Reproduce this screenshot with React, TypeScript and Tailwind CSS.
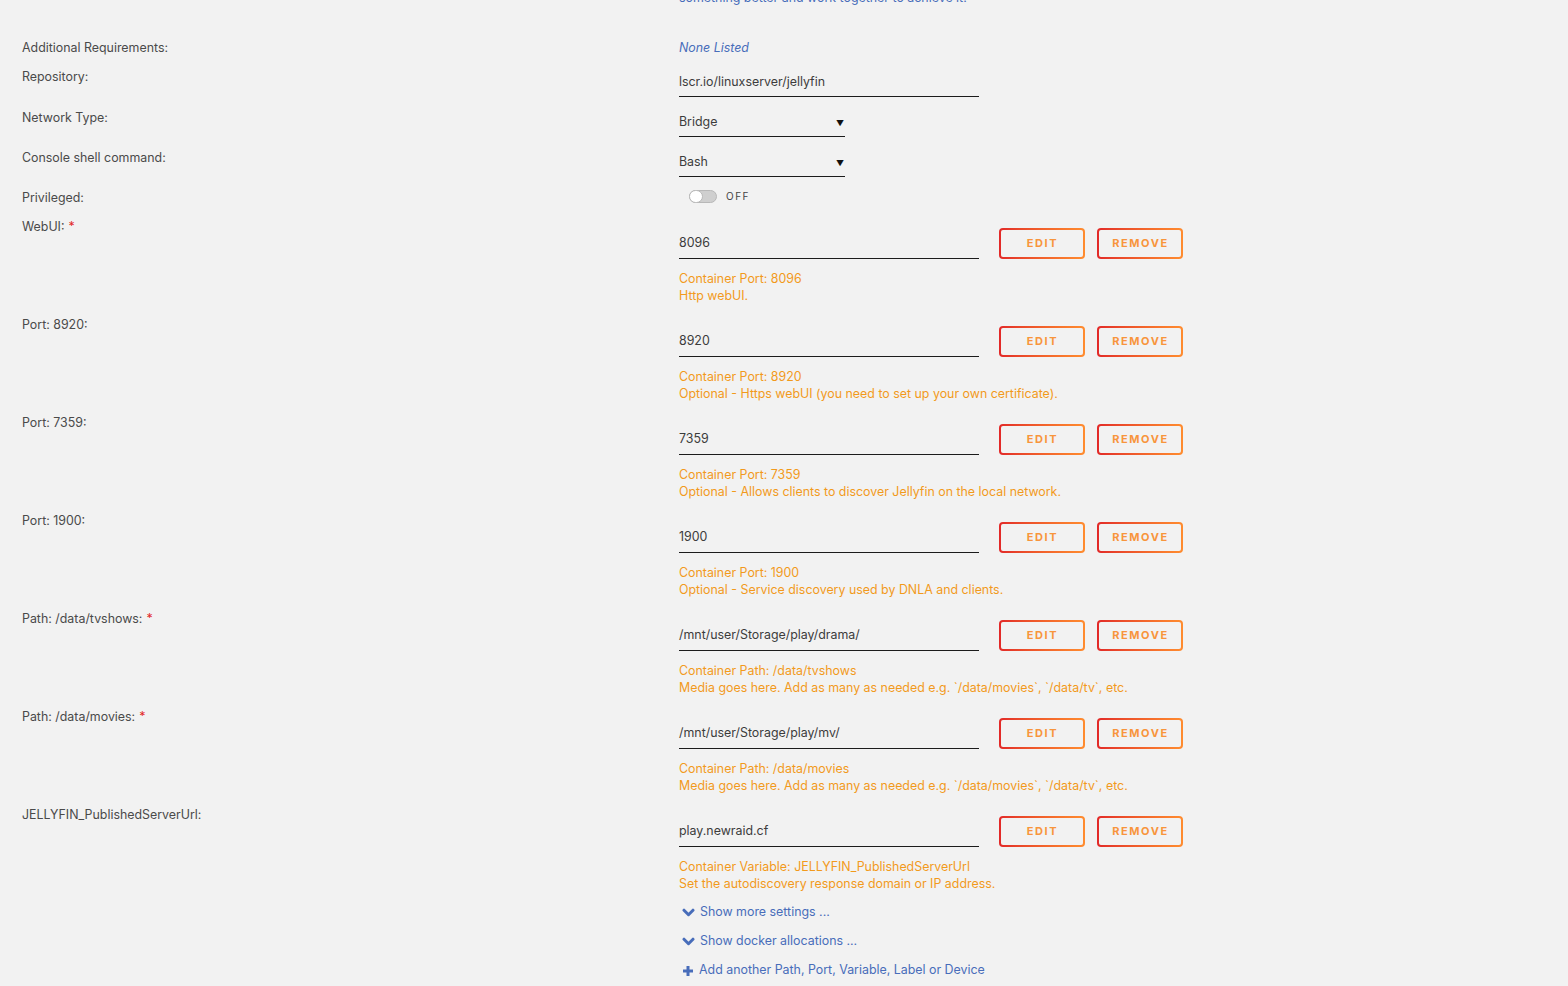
import React from 'react';

// ============================================
// Docker container template form (Unraid style)
// ============================================

interface PortRow {
    label: string;
    required?: boolean;
    value: string;
    target: string;
    note: string;
}

const ROWS: PortRow[] = [
    { label: 'WebUI:', required: true, value: '8096', target: 'Container Port: 8096', note: 'Http webUI.' },
    { label: 'Port: 8920:', value: '8920', target: 'Container Port: 8920', note: 'Optional - Https webUI (you need to set up your own certificate).' },
    { label: 'Port: 7359:', value: '7359', target: 'Container Port: 7359', note: 'Optional - Allows clients to discover Jellyfin on the local network.' },
    { label: 'Port: 1900:', value: '1900', target: 'Container Port: 1900', note: 'Optional - Service discovery used by DNLA and clients.' },
    {
        label: 'Path: /data/tvshows:',
        required: true,
        value: '/mnt/user/Storage/play/drama/',
        target: 'Container Path: /data/tvshows',
        note: 'Media goes here. Add as many as needed e.g. `/data/movies`, `/data/tv`, etc.',
    },
    {
        label: 'Path: /data/movies:',
        required: true,
        value: '/mnt/user/Storage/play/mv/',
        target: 'Container Path: /data/movies',
        note: 'Media goes here. Add as many as needed e.g. `/data/movies`, `/data/tv`, etc.',
    },
    {
        label: 'JELLYFIN_PublishedServerUrl:',
        value: 'play.newraid.cf',
        target: 'Container Variable: JELLYFIN_PublishedServerUrl',
        note: 'Set the autodiscovery response domain or IP address.',
    },
];

const Label = ({ text, required }: { text: string; required?: boolean }) => (
    <div className="w-[679px] shrink-0 pl-[22px] pt-[1px] leading-[18px] text-[#4a4a4a]">
        {text}
        {required && <span className="ml-1 text-[#e22828]">*</span>}
    </div>
);

const GradientButton = ({ children }: { children: React.ReactNode }) => (
    <div className="h-[31px] w-[86px] rounded-[4px] bg-gradient-to-r from-[#e22828] to-[#ff8c2f] p-[2px]">
        <div className="flex h-full w-full items-center justify-center rounded-[2px] bg-[#f2f2f2] pl-[1px] text-[11px] font-bold tracking-[1.6px] text-[#f8953c]">
            {children}
        </div>
    </div>
);

const Select = ({ value }: { value: string }) => (
    <div className="flex h-[29px] w-[166px] items-center justify-between border-b border-[#1c1c1c] pt-[1px] text-[#3c3c3c]">
        <span>{value}</span>
        <span className="mr-[1px] text-[8px] text-[#111]">▼</span>
    </div>
);

const ChevronDown = () => (
    <svg width="13" height="13" viewBox="0 0 13 13" className="ml-[1px] mr-[5px]">
        <path d="M2 4.2 L6.5 8.7 L11 4.2" fill="none" stroke="#486dba" strokeWidth="3" strokeLinecap="round" strokeLinejoin="round" />
    </svg>
);

const Plus = () => (
    <svg width="12" height="12" viewBox="0 0 12 12" className="ml-[1px] mr-[5px]">
        <path d="M6 1 V11 M1 6 H11" stroke="#486dba" strokeWidth="3" />
    </svg>
);

export default function App() {
    return (
        <div
            className="min-h-screen overflow-hidden bg-[#f2f2f2] text-[12.4px]"
            style={{ fontFamily: 'Inter, "Noto Sans", sans-serif' }}
        >
            {/* cut-off description from the section above */}
            <div className="mt-[-11px] h-[17px] pl-[679px] leading-[17px] text-[#486dba]">
                something better and work together to achieve it.
            </div>

            <div className="mt-[32px]">
                {/* Additional requirements */}
                <div className="flex h-[29px]">
                    <Label text="Additional Requirements:" />
                    <div className="pt-[1px] leading-[18px] italic text-[#486dba]">None Listed</div>
                </div>

                {/* Repository */}
                <div className="flex h-[41px]">
                    <Label text="Repository:" />
                    <div className="flex h-[30px] w-[300px] items-center border-b border-[#1c1c1c] pt-[1px] text-[#3c3c3c]">
                        lscr.io/linuxserver/jellyfin
                    </div>
                </div>

                {/* Network type */}
                <div className="flex h-[40px]">
                    <Label text="Network Type:" />
                    <Select value="Bridge" />
                </div>

                {/* Console shell */}
                <div className="flex h-[40px]">
                    <Label text="Console shell command:" />
                    <Select value="Bash" />
                </div>

                {/* Privileged */}
                <div className="flex h-[29px]">
                    <Label text="Privileged:" />
                    <div className="flex h-[16px] items-center pl-[10px]">
                        <div className="relative h-[13px] w-[28px] rounded-full border border-[#b8b8b8] bg-[#cfcfcf]">
                            <div className="absolute left-[-1px] top-[-1px] h-[13px] w-[14px] rounded-full border border-[#b8b8b8] bg-white" />
                        </div>
                        <span className="ml-[9px] text-[10px] tracking-[1.5px] text-[#444]">OFF</span>
                    </div>
                </div>

                {/* Ports / paths / variables */}
                {ROWS.map((row) => (
                    <div key={row.label} className="flex h-[98px]">
                        <Label text={row.label} required={row.required} />
                        <div className="pt-[11px]">
                            <div className="flex items-start gap-[20px]">
                                <div className="flex h-[31px] w-[300px] items-center border-b border-[#1c1c1c] pt-[1px] text-[#3c3c3c]">
                                    {row.value}
                                </div>
                                <div className="flex gap-[12px]">
                                    <GradientButton>EDIT</GradientButton>
                                    <GradientButton>REMOVE</GradientButton>
                                </div>
                            </div>
                            <div className="mt-[11px] leading-[17px] text-[#f29a1c]">
                                <div>{row.target}</div>
                                <div>{row.note}</div>
                            </div>
                        </div>
                    </div>
                ))}

                {/* Links */}
                <div className="mt-[-5px] pl-[681px] text-[#486dba]">
                    <div className="flex h-[29px] items-center">
                        <ChevronDown />
                        Show more settings ...
                    </div>
                    <div className="flex h-[29px] items-center">
                        <ChevronDown />
                        Show docker allocations ...
                    </div>
                    <div className="flex h-[29px] items-center">
                        <Plus />
                        Add another Path, Port, Variable, Label or Device
                    </div>
                </div>
            </div>
        </div>
    );
}
